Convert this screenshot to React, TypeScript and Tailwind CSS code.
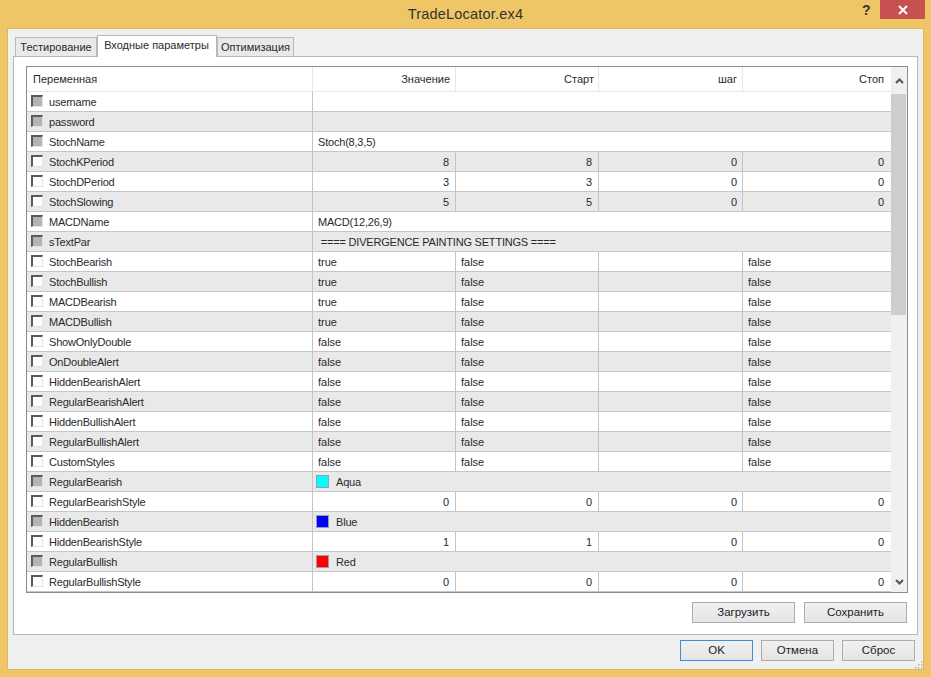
import React from "react";

type Row = { name: string; on?: boolean; cells?: string[]; span?: string; color?: string; right?: boolean };

const bools = (a: string): string[] => [a, "false", "", "false"];
const nums = (a: string): string[] => [a, a, "0", "0"];

const rows: Row[] = [
  { name: "username", on: true, span: "" },
  { name: "password", on: true, span: "" },
  { name: "StochName", on: true, span: "Stoch(8,3,5)" },
  { name: "StochKPeriod", cells: nums("8"), right: true },
  { name: "StochDPeriod", cells: nums("3"), right: true },
  { name: "StochSlowing", cells: nums("5"), right: true },
  { name: "MACDName", on: true, span: "MACD(12,26,9)" },
  { name: "sTextPar", on: true, span: " ==== DIVERGENCE PAINTING SETTINGS ====" },
  { name: "StochBearish", cells: bools("true") },
  { name: "StochBullish", cells: bools("true") },
  { name: "MACDBearish", cells: bools("true") },
  { name: "MACDBullish", cells: bools("true") },
  { name: "ShowOnlyDouble", cells: bools("false") },
  { name: "OnDoubleAlert", cells: bools("false") },
  { name: "HiddenBearishAlert", cells: bools("false") },
  { name: "RegularBearishAlert", cells: bools("false") },
  { name: "HiddenBullishAlert", cells: bools("false") },
  { name: "RegularBullishAlert", cells: bools("false") },
  { name: "CustomStyles", cells: bools("false") },
  { name: "RegularBearish", on: true, span: "Aqua", color: "bg-[#00ffff]" },
  { name: "RegularBearishStyle", cells: nums("0"), right: true },
  { name: "HiddenBearish", on: true, span: "Blue", color: "bg-[#0000ff]" },
  { name: "HiddenBearishStyle", cells: nums("1"), right: true },
  { name: "RegularBullish", on: true, span: "Red", color: "bg-[#ff0000]" },
  { name: "RegularBullishStyle", cells: nums("0"), right: true },
];

const gridCols = "grid grid-cols-[286px_143px_143px_144px_148px]";
const cellPad = ["pr-[6px]", "pr-[6px]", "pr-[5px]", "pr-[7px]"];
const headPad = ["pr-[5px]", "pr-[4px]", "pr-[5px]", "pr-[7px]"];

function Check({ on }: { on?: boolean }) {
  return (
    <span
      className={`block w-[12px] h-[12px] mt-[-1px] border-l-2 border-t-2 border-l-[#5a5a5a] border-t-[#5a5a5a] border-r border-b border-r-[#e4e4e4] border-b-[#e4e4e4] ${
        on ? "bg-[#b4b4b4]" : "bg-white"
      }`}
    />
  );
}

function Btn({ label, w, primary }: { label: string; w: string; primary?: boolean }) {
  return (
    <button
      className={`${w} h-[21px] border text-[11.5px] text-[#222] bg-gradient-to-b from-[#f1f1f1] to-[#e4e4e4] ${
        primary ? "border-[#3c8fd6]" : "border-[#adadad]"
      }`}
    >
      {label}
    </button>
  );
}

function TableRow({ row, index }: { row: Row; index: number }) {
  const bg = index % 2 === 1 ? "bg-[#e9e9e9]" : "bg-white";
  const line = "border-r border-[#c4c4c4]";
  return (
    <div className={`${gridCols} h-[20px] border-b border-[#c6c6c6] ${bg}`}>
      <div className={`flex items-center pl-[4px] gap-[6px] ${line}`}>
        <Check on={row.on} />
        <span className="pt-[1px] tracking-[-0.2px]">{row.name}</span>
      </div>
      {row.span !== undefined ? (
        <div className="col-span-4 flex items-center pl-[5px] whitespace-pre tracking-[-0.2px]">
          {row.color && (
            <span className={`w-[13px] h-[13px] mr-[7px] ml-[-2px] border border-[#9a9ab0] ${row.color}`} />
          )}
          <span className="pt-[1px]">{row.span}</span>
        </div>
      ) : (
        row.cells!.map((c, i) => (
          <div
            key={i}
            className={`flex items-center pt-[1px] ${row.right ? `justify-end ${cellPad[i]}` : "pl-[5px]"} ${
              i < 3 ? line : ""
            }`}
          >
            {c}
          </div>
        ))
      )}
    </div>
  );
}

export default function App() {
  return (
    <div
      className="w-[931px] h-[677px] bg-[#efc666] flex flex-col overflow-hidden text-[11px] text-[#2a2a2a]"
      style={{ fontFamily: '"Liberation Sans", Arial, sans-serif' }}
    >
      <div className="h-[28px] flex shrink-0 relative">
        <div className="flex-1 flex items-center justify-center text-[14.5px] text-[#333] tracking-[0.2px] pt-[1px]">
          TradeLocator.ex4
        </div>
        <span className="absolute left-[862px] top-[0px] font-bold text-[14px] text-[#333]">?</span>
        <div className="absolute left-[880px] top-0 w-[45px] h-[19px] bg-[#c75050] flex items-center justify-center">
          <svg width="10" height="10" viewBox="0 0 10 10">
            <path d="M1 1L9 9M9 1L1 9" stroke="#fff" strokeWidth="2" />
          </svg>
        </div>
      </div>

      <div className="mx-[7px] h-[642px] bg-[#f0f0f0] border border-[#d8b868] flex flex-col px-[5px] relative">
        <div className="flex items-end h-[27px] pl-[2px] relative z-10">
          <div className="h-[19px] w-[82px] bg-[#e9e9e9] border border-[#b8b8b8] border-b-0 flex items-center justify-center pt-[1px]">
            Тестирование
          </div>
          <div className="h-[22px] w-[120px] bg-white border border-[#b8b8b8] border-b-0 flex items-center justify-center mb-[-1px] pb-[3px] pr-[1px]">
            Входные параметры
          </div>
          <div className="h-[19px] w-[77px] bg-[#e9e9e9] border border-[#b8b8b8] border-b-0 flex items-center justify-center pt-[1px]">
            Оптимизация
          </div>
        </div>

        <div className="w-[905px] h-[579px] bg-white border border-[#b8b8b8] pt-[9px] pl-[12px]">
          <div className="w-[882px] h-[527px] border border-[#8c8c8c] flex overflow-hidden">
            <div className="w-[864px] shrink-0 flex flex-col">
              <div className={`${gridCols} h-[25px] border-b border-[#e6e6e6] bg-white shrink-0`}>
                <div className="flex items-center pl-[6px] border-r border-[#e6e6e6]">Переменная</div>
                {["Значение", "Старт", "шаг", "Стоп"].map((h, i) => (
                  <div
                    key={h}
                    className={`flex items-center justify-end ${headPad[i]} ${i < 3 ? "border-r border-[#e6e6e6]" : ""}`}
                  >
                    {h}
                  </div>
                ))}
              </div>
              {rows.map((r, i) => (
                <TableRow key={r.name} row={r} index={i} />
              ))}
            </div>
            <div className="flex-1 bg-[#f0f0f0] flex flex-col items-center">
              <div className="h-[27px] flex items-center justify-center shrink-0">
                <svg width="9" height="6" viewBox="0 0 9 6">
                  <path d="M1 5L4.5 1.5L8 5" fill="none" stroke="#555" strokeWidth="2" />
                </svg>
              </div>
              <div className="w-[15px] mr-[1px] h-[221px] bg-[#cdcdcd] shrink-0" />
              <div className="flex-1" />
              <div className="h-[20px] flex items-center justify-center shrink-0">
                <svg width="9" height="6" viewBox="0 0 9 6">
                  <path d="M1 1L4.5 4.5L8 1" fill="none" stroke="#555" strokeWidth="2" />
                </svg>
              </div>
            </div>
          </div>
          <div className="flex justify-end gap-[9px] mt-[9px] pr-[10px]">
            <Btn label="Загрузить" w="w-[103px]" />
            <Btn label="Сохранить" w="w-[103px]" />
          </div>
        </div>

        <div className="flex justify-end gap-[8px] mt-[5px] pr-[3px]">
          <Btn label="OK" w="w-[73px]" primary />
          <Btn label="Отмена" w="w-[73px]" />
          <Btn label="Сброс" w="w-[73px]" />
        </div>
        <svg className="absolute right-[0px] bottom-[0px]" width="8" height="8" viewBox="0 0 8 8">
          <g fill="#b5b5b5">
            <rect x="6" y="0" width="1.5" height="1.5" />
            <rect x="3" y="3" width="1.5" height="1.5" />
            <rect x="6" y="3" width="1.5" height="1.5" />
            <rect x="0" y="6" width="1.5" height="1.5" />
            <rect x="3" y="6" width="1.5" height="1.5" />
            <rect x="6" y="6" width="1.5" height="1.5" />
          </g>
        </svg>
      </div>
    </div>
  );
}
